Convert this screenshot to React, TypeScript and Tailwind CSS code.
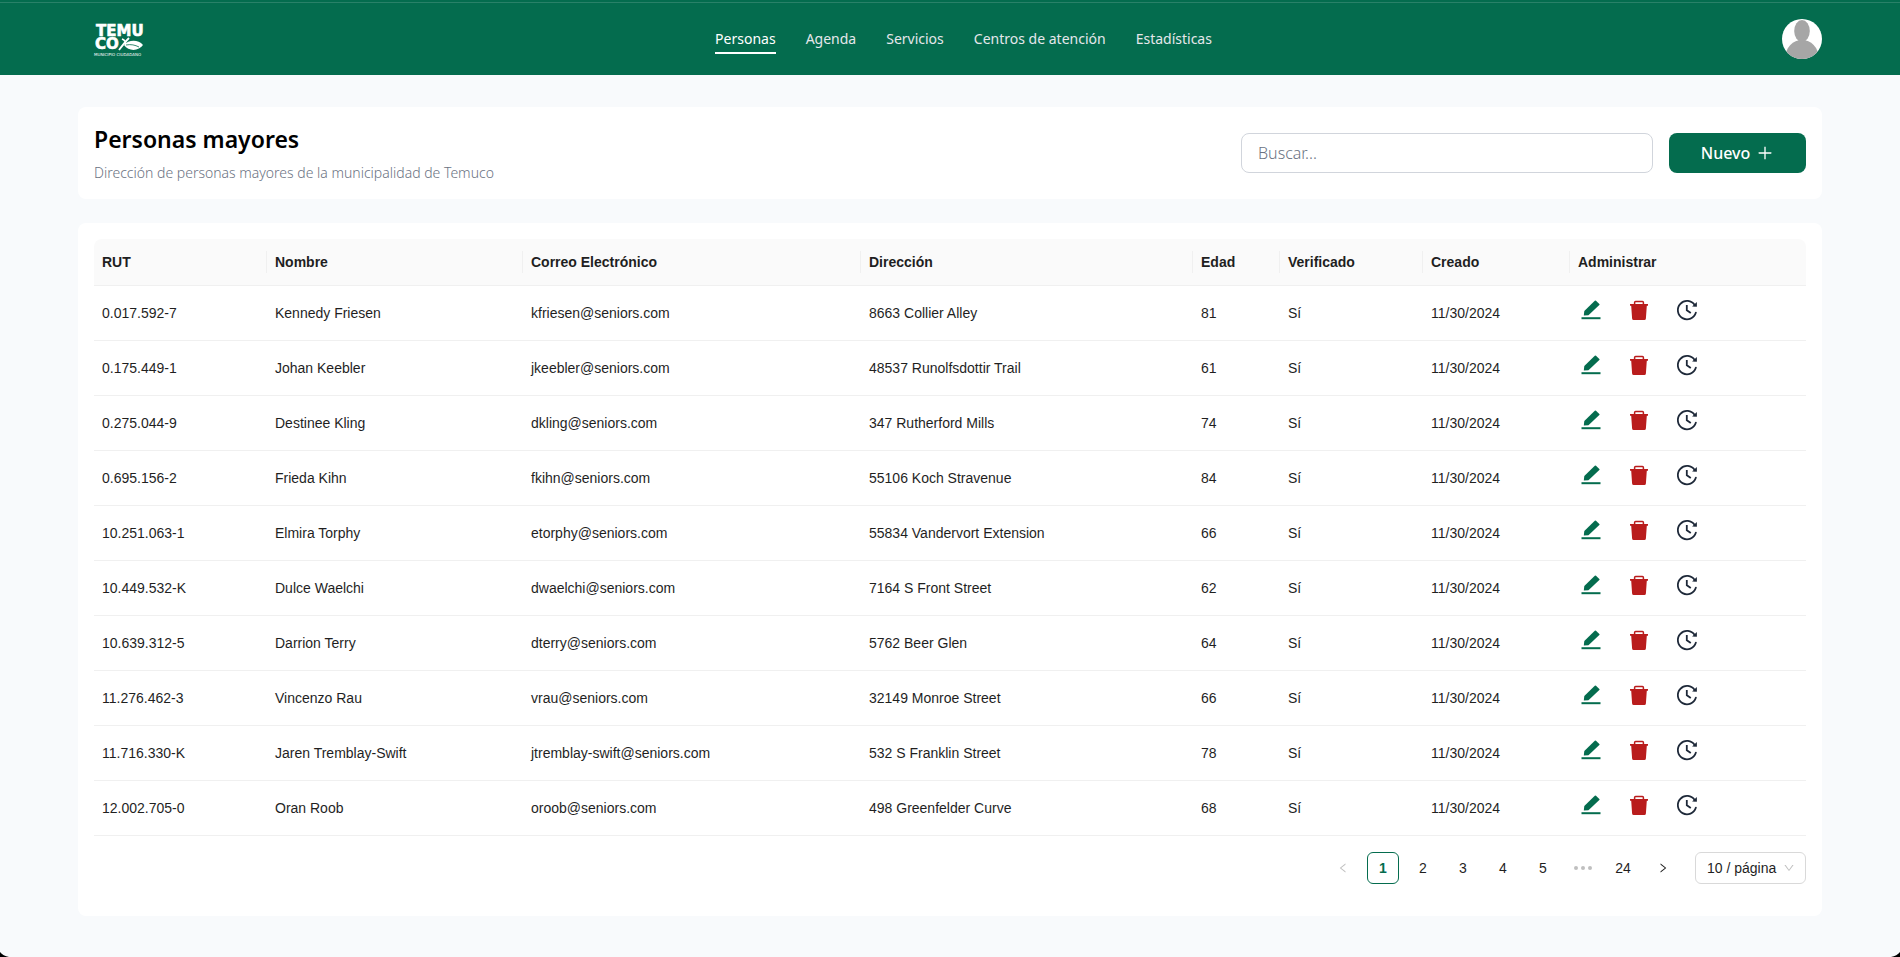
import { useState } from 'react';
import clsx from 'clsx';
import { AiOutlineDown, AiOutlineLeft, AiOutlinePlus, AiOutlineRight } from 'react-icons/ai';

interface Senior {
  rut: string;
  name: string;
  email: string;
  address: string;
  age: number;
}

const LINKS = ['Personas', 'Agenda', 'Servicios', 'Centros de atención', 'Estadísticas'];

const COLUMNS = [
  { title: 'RUT', width: 'w-[173px]' },
  { title: 'Nombre', width: 'w-[256px]' },
  { title: 'Correo Electrónico', width: 'w-[338px]' },
  { title: 'Dirección', width: 'w-[332px]' },
  { title: 'Edad', width: 'w-[87px]' },
  { title: 'Verificado', width: 'w-[143px]' },
  { title: 'Creado', width: 'w-[147px]' },
  { title: 'Administrar', width: 'w-[236px]' },
];

const SENIORS: Senior[] = [
  { rut: '0.017.592-7', name: 'Kennedy Friesen', email: 'kfriesen@seniors.com', address: '8663 Collier Alley', age: 81 },
  { rut: '0.175.449-1', name: 'Johan Keebler', email: 'jkeebler@seniors.com', address: '48537 Runolfsdottir Trail', age: 61 },
  { rut: '0.275.044-9', name: 'Destinee Kling', email: 'dkling@seniors.com', address: '347 Rutherford Mills', age: 74 },
  { rut: '0.695.156-2', name: 'Frieda Kihn', email: 'fkihn@seniors.com', address: '55106 Koch Stravenue', age: 84 },
  { rut: '10.251.063-1', name: 'Elmira Torphy', email: 'etorphy@seniors.com', address: '55834 Vandervort Extension', age: 66 },
  { rut: '10.449.532-K', name: 'Dulce Waelchi', email: 'dwaelchi@seniors.com', address: '7164 S Front Street', age: 62 },
  { rut: '10.639.312-5', name: 'Darrion Terry', email: 'dterry@seniors.com', address: '5762 Beer Glen', age: 64 },
  { rut: '11.276.462-3', name: 'Vincenzo Rau', email: 'vrau@seniors.com', address: '32149 Monroe Street', age: 66 },
  { rut: '11.716.330-K', name: 'Jaren Tremblay-Swift', email: 'jtremblay-swift@seniors.com', address: '532 S Franklin Street', age: 78 },
  { rut: '12.002.705-0', name: 'Oran Roob', email: 'oroob@seniors.com', address: '498 Greenfelder Curve', age: 68 },
];

const Logo = () => (
  <svg width="52" height="34" viewBox="0 0 52 34" fill="white" aria-label="Temuco" fontFamily="DejaVu Sans, sans-serif">
    <text fontSize="15" fontWeight="700" stroke="white" strokeWidth="0.6">
      <tspan x="3" y="14">TEMU</tspan>
      <tspan x="2" y="27">CO</tspan>
    </text>
    <text x="1" y="34" fontSize="4">
      MUNICIPIO CIUDADANO
    </text>
    <path d="M31 23c4-5 14-6 19 0-4 6-14 7-19 0z" />
    <path d="M26 28c3-4 6-8 10-12M29 17c3 1 4 3 4 7" fill="none" stroke="white" strokeWidth="1.8" />
    <path d="M33 23c5-1 9 0 13 2" fill="none" stroke="#046c4e" strokeWidth="0.8" />
  </svg>
);

const Avatar = () => (
  <svg className="size-10 rounded-full bg-white" viewBox="0 0 40 40" fill="#a6a6a6">
    <ellipse cx="20" cy="12" rx="7.8" ry="11" />
    <ellipse cx="20" cy="38" rx="16.5" ry="17" />
  </svg>
);

const EditIcon = () => (
  <svg className="size-6 text-[#046c4e]" viewBox="-1 0 24 24" fill="currentColor">
    <path d="M4.8 17.6l.5-4.7L15.8 2.7q.6-.5 1.2 0l3.3 3.2q.6.6 0 1.2L9.4 17.2z" />
    <path d="M2.5 19.2h19v2h-19z" />
  </svg>
);

const TrashIcon = () => (
  <svg className="size-6 text-[#b91c1c]" viewBox="-1 0 24 24" fill="currentColor">
    <path d="M7.6 6.5v-2q0-1 1-1h6.8q1 0 1 1v2" fill="none" stroke="currentColor" strokeWidth="1.5" />
    <path d="M3 6h18v1.8h-1.2l-.9 12.7q-.1 1.5-1.6 1.5H6.7q-1.5 0-1.6-1.5L4.2 7.8H3z" />
  </svg>
);

const HistoryIcon = () => (
  <svg className="size-6 text-gray-800" viewBox="-1 0 24 24" fill="none" stroke="currentColor" strokeWidth="1.8">
    <path d="M19.8 7.2A9.2 9.2 0 1 0 20.9 14.6" strokeLinecap="round" />
    <path d="M11.8 7v5.2l4 2.9" />
    <path d="M21.9 4v4.8l-4.8-.3z" fill="currentColor" stroke="none" />
  </svg>
);

const Navbar = () => (
  <header className="bg-[#046c4e] font-['Noto_Sans',sans-serif]">
    <div className="h-[3px] border-b border-white/15" />
    <div className="flex h-18 items-center justify-between pr-[78px] pl-[93px]">
      <a href="#">
        <Logo />
      </a>
      <nav className="flex gap-[30px] text-sm">
        {LINKS.map((link, i) => (
          <a
            key={link}
            href="#"
            className={clsx(
              'border-y-2 border-transparent py-[3px]',
              i === 0 ? 'border-b-white text-white' : 'text-gray-200'
            )}
          >
            {link}
          </a>
        ))}
      </nav>
      <button aria-label="Perfil">
        <Avatar />
      </button>
    </div>
  </header>
);

const SeniorsTable = () => (
  <table className="w-full table-fixed text-left text-sm text-[#1f1f1f]">
    <thead>
      <tr>
        {COLUMNS.map(({ title, width }, i) => (
          <th
            key={title}
            className={clsx(
              'h-[46px] border-b border-[#f0f0f0] bg-[#fafafa] p-0 font-bold first:rounded-tl-lg last:rounded-tr-lg',
              width
            )}
          >
            <div className={clsx('px-2 leading-[22px]', i < COLUMNS.length - 1 && 'border-r border-[#f0f0f0]')}>
              {title}
            </div>
          </th>
        ))}
      </tr>
    </thead>
    <tbody>
      {SENIORS.map((senior) => (
        <tr key={senior.rut} className="h-[55px] border-b border-[#f0f0f0]">
          <td className="px-2">{senior.rut}</td>
          <td className="px-2">{senior.name}</td>
          <td className="px-2">{senior.email}</td>
          <td className="px-2">{senior.address}</td>
          <td className="px-2">{senior.age}</td>
          <td className="px-2">Sí</td>
          <td className="px-2">11/30/2024</td>
          <td className="px-2">
            <div className="flex gap-6 pb-1.5">
              <button aria-label="Editar">
                <EditIcon />
              </button>
              <button aria-label="Eliminar">
                <TrashIcon />
              </button>
              <button aria-label="Historial">
                <HistoryIcon />
              </button>
            </div>
          </td>
        </tr>
      ))}
    </tbody>
  </table>
);

const Pagination = () => {
  const [page, setPage] = useState(1);

  const renderPage = (n: number) => (
    <button
      key={n}
      onClick={() => setPage(n)}
      className={clsx(
        'size-8 rounded-md border',
        n === page ? 'border-[#046c4e] font-bold text-[#046c4e]' : 'border-transparent'
      )}
    >
      {n}
    </button>
  );

  return (
    <div className="my-4 flex items-center justify-end gap-2 text-sm text-[#1f1f1f]">
      <button aria-label="Anterior" disabled className="flex size-8 items-center justify-center text-black/25">
        <AiOutlineLeft size={12} />
      </button>
      {[1, 2, 3, 4, 5].map(renderPage)}
      <span className="flex size-8 items-center justify-center gap-[3px]">
        <i className="size-1 rounded-full bg-black/25" />
        <i className="size-1 rounded-full bg-black/25" />
        <i className="size-1 rounded-full bg-black/25" />
      </span>
      {renderPage(24)}
      <button aria-label="Siguiente" className="flex size-8 items-center justify-center">
        <AiOutlineRight size={12} />
      </button>
      <div className="relative ml-2">
        <select
          aria-label="Resultados por página"
          className="h-8 w-[111px] appearance-none rounded-md border border-[#d9d9d9] bg-white pl-[11px]"
        >
          <option>10 / página</option>
          <option>20 / página</option>
          <option>50 / página</option>
        </select>
        <AiOutlineDown size={12} className="pointer-events-none absolute top-2.5 right-[11px] text-black/25" />
      </div>
    </div>
  );
};

export default function App() {
  return (
    <div className="min-h-screen bg-slate-50 font-['Liberation_Sans',sans-serif]">
      <Navbar />
      <main className="flex flex-col gap-6 px-[78px] py-8">
        <section className="flex items-center justify-between rounded-lg bg-white p-4 font-['Noto_Sans',sans-serif]">
          <div>
            <h1 className="text-[23px] leading-8 font-semibold text-black">Personas mayores</h1>
            <p className="mt-2 text-sm font-light text-gray-500">
              Dirección de personas mayores de la municipalidad de Temuco
            </p>
          </div>
          <div className="flex gap-4">
            <input
              type="text"
              aria-label="Buscar"
              placeholder="Buscar..."
              className="h-10 w-[412px] rounded-lg border border-gray-300 px-4 font-light placeholder:text-gray-500"
            />
            <button className="flex h-10 w-[137px] items-center justify-center gap-1.5 rounded-lg bg-[#046c4e] font-medium text-white">
              Nuevo
              <AiOutlinePlus size={18} />
            </button>
          </div>
        </section>
        <section className="rounded-lg bg-white p-4">
          <SeniorsTable />
          <Pagination />
        </section>
      </main>
      {/* window corners */}
      <svg className="fixed bottom-0 left-0" width="9" height="5" viewBox="0 0 9 5">
        <path d="M0 0v5h9Q3 4 0 0z" />
      </svg>
      <svg className="fixed right-0 bottom-0" width="9" height="5" viewBox="0 0 9 5">
        <path d="M9 0v5H0Q6 4 9 0z" />
      </svg>
    </div>
  );
}
